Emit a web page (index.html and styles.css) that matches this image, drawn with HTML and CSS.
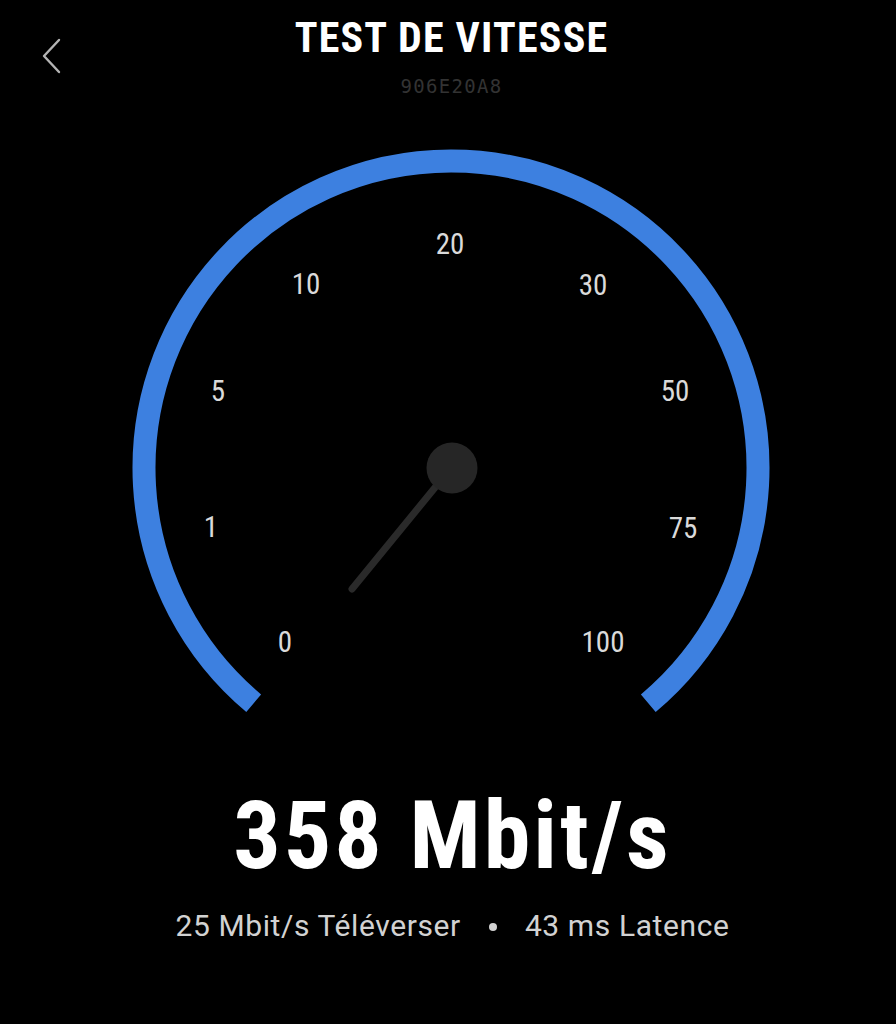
FILE: index.html
```html
<!DOCTYPE html>
<html lang="fr">
<head>
<meta charset="utf-8">
<title>Test de vitesse</title>
<link rel="stylesheet" href="styles.css">
</head>
<body>
<div class="screen">
  <header class="topbar">
    <div class="back">
      <svg class="chevron" width="24" height="40" viewBox="0 0 24 40">
        <polyline points="19,3 4,19 19,35" fill="none" stroke="#b4b4b4" stroke-width="2.4" stroke-linecap="round" stroke-linejoin="round"/>
      </svg>
    </div>
    <div class="titles">
      <h1 class="title">TEST DE VITESSE</h1>
      <div class="device-id">906E20A8</div>
    </div>
    <div class="spacer"></div>
  </header>

  <section class="gauge">
    <svg class="dial" width="896" height="580" viewBox="0 140 896 580">
      <path d="M 253.7 703.2 A 307 307 0 1 1 648.3 703.2" fill="none" stroke="#3d80e0" stroke-width="23"/>
      <g class="ticks">
        <text x="285" y="652">0</text>
        <text x="211" y="537">1</text>
        <text x="218" y="401">5</text>
        <text x="306" y="294">10</text>
        <text x="450" y="254">20</text>
        <text x="593" y="295">30</text>
        <text x="675" y="401">50</text>
        <text x="683" y="538">75</text>
        <text x="603" y="652">100</text>
      </g>
      <line x1="451" y1="468" x2="352" y2="589" stroke="#2a2a2a" stroke-width="7" stroke-linecap="round"/>
      <circle cx="452" cy="468" r="25.5" fill="#262626"/>
    </svg>
  </section>

  <section class="result">
    <div class="speed">358 Mbit/s</div>
    <div class="details">
      <span>25 Mbit/s Téléverser</span>
      <span class="dot"></span>
      <span>43 ms Latence</span>
    </div>
  </section>
</div>
</body>
</html>
```

FILE: styles.css
```css
html, body {
  margin: 0;
  padding: 0;
  background: #000;
}

body {
  width: 896px;
  height: 1024px;
  overflow: hidden;
  font-family: "Roboto Condensed", Roboto, "Noto Sans", sans-serif;
  font-stretch: 85%;
  color: #fff;
}

.screen {
  display: flex;
  flex-direction: column;
}

.topbar {
  height: 140px;
  box-sizing: border-box;
  display: grid;
  grid-template-columns: 1fr auto 1fr;
  align-items: start;
  padding-top: 17px;
}

.back {
  padding-left: 40px;
  padding-top: 20px;
}

.chevron {
  display: block;
}

.titles {
  display: flex;
  flex-direction: column;
  align-items: center;
  padding-left: 7px;
}

.title {
  margin: 0;
  font-size: 42px;
  line-height: 42px;
  font-weight: 700;
  letter-spacing: 1.2px;
  color: #fff;
}

.device-id {
  margin-top: 17px;
  font-family: "DejaVu Sans Mono", "Liberation Mono", monospace;
  font-stretch: normal;
  font-size: 19px;
  line-height: 20px;
  color: #333;
  letter-spacing: 1.3px;
}

.gauge {
  display: flex;
  justify-content: center;
}

.dial {
  display: block;
}

.ticks text {
  font-family: "Roboto Condensed", Roboto, "Noto Sans", sans-serif;
  font-stretch: 85%;
  font-size: 29px;
  fill: #dadada;
  text-anchor: middle;
}

.result {
  display: flex;
  flex-direction: column;
  align-items: center;
  margin-top: 69px;
  padding-left: 9px;
}

.speed {
  font-size: 94px;
  line-height: 94px;
  font-weight: 700;
  letter-spacing: 3px;
  color: #fff;
}

.details {
  margin-top: 28px;
  display: flex;
  align-items: center;
  gap: 28px;
  font-family: Roboto, "Noto Sans", sans-serif;
  font-stretch: normal;
  font-size: 30px;
  line-height: 30px;
  color: #d2d2d2;
  letter-spacing: 0.6px;
}

.dot {
  width: 8px;
  height: 8px;
  border-radius: 50%;
  background: #d2d2d2;
  margin-top: 2px;
}
```
